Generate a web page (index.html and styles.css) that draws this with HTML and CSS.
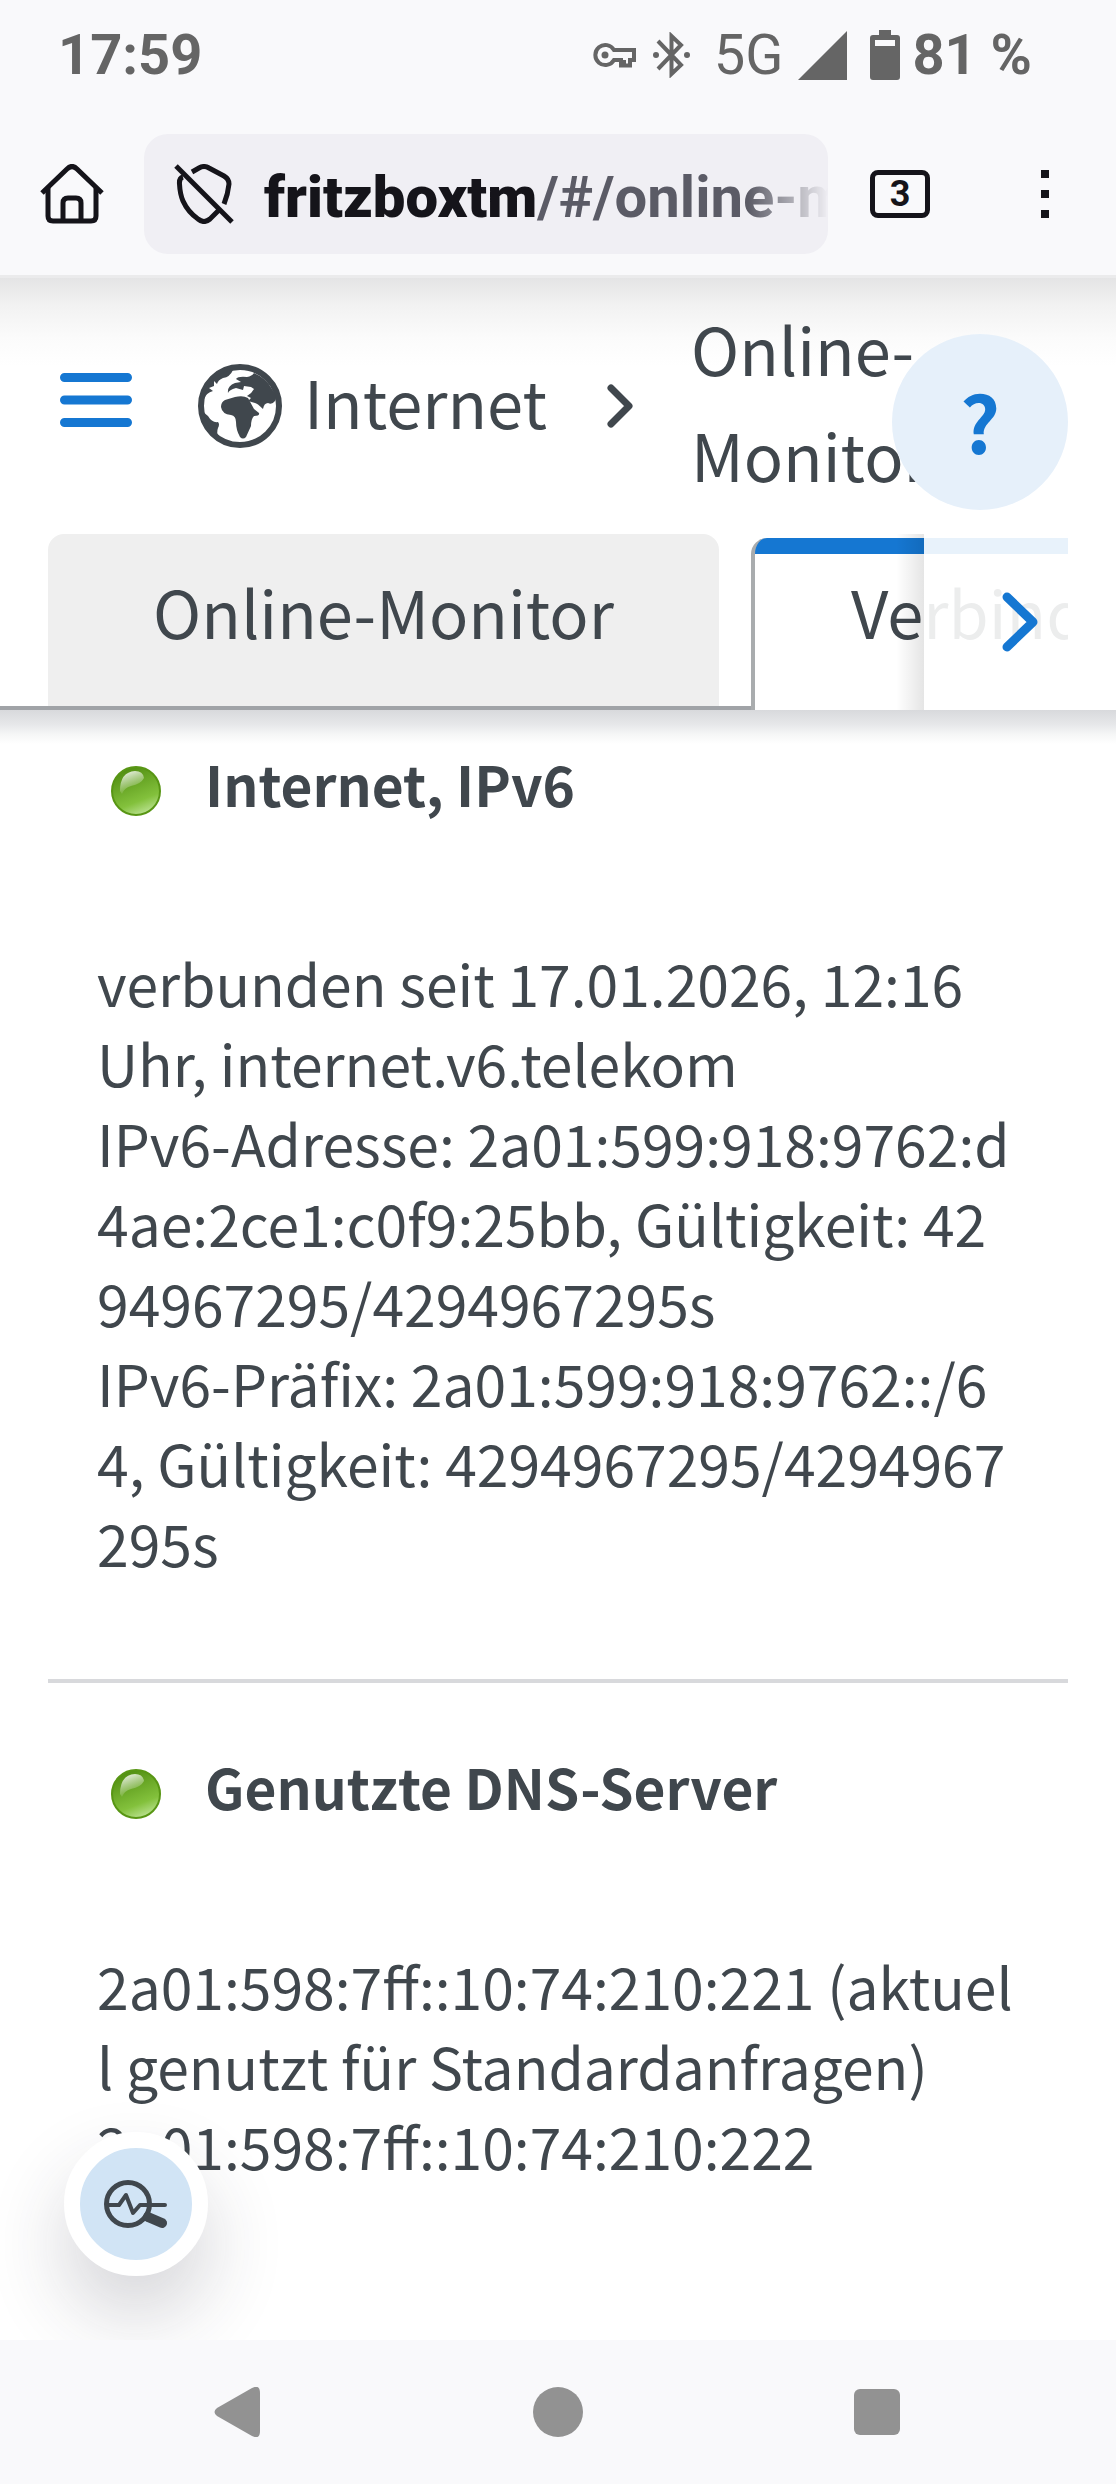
FILE: index.html
```html
<!DOCTYPE html>
<html lang="de">
<head>
<meta charset="utf-8">
<meta name="viewport" content="width=device-width, initial-scale=1">
<title>Online-Monitor</title>
<link rel="stylesheet" href="styles.css">
</head>
<body>
<div class="screen">
  <div class="statusbar">
    <span class="clock">17:59</span>
    <div class="indicators">
      <svg class="i-key" width="43" height="26" viewBox="0 0 43 26" fill="none" stroke="#656565"><path d="M21 8H41V18H37V23.500H28V18H21A10 10 0 1 1 21 8Z" stroke-width="4"/><path d="M31 18V24" stroke-width="4"/><circle cx="12" cy="13" r="3.500" fill="#656565" stroke="none"/></svg>
      <svg class="i-bt" width="37" height="46" viewBox="0 0 37 46" fill="none" stroke="#656565" stroke-width="4"><path d="M5 9L28 33L18.500 42V4L28 13L5 37"/><circle cx="3" cy="23" r="3" fill="#656565" stroke="none"/><circle cx="34" cy="23" r="3" fill="#656565" stroke="none"/></svg>
      <span class="network">5G</span>
      <svg class="i-signal" width="49" height="49" viewBox="0 0 49 49" fill="#656565"><path d="M49 0V49H0Z"/></svg>
      <svg class="i-battery" width="30" height="50" viewBox="0 0 30 50"><path d="M9 0H21V5H27Q30 5 30 8V47Q30 50 27 50H3Q0 50 0 47V8Q0 5 3 5H9Z" fill="#656565"/><path d="M5 10H25V16H5Z" fill="#f9f9fb"/></svg>
      <span class="percent">81 %</span>
    </div>
  </div>

  <div class="toolbar">
    <button class="icon-button" aria-label="Startseite"><svg width="64" height="60" viewBox="0 0 64 60" fill="none" stroke="#15141a" stroke-width="5"><path d="M2 29L27 5Q32 0 37 5L62 29"/><path d="M8 24V52Q8 57 13 57H51Q56 57 56 52V24M23 57V39Q23 34 28 34H36Q41 34 41 39V57"/></svg></button>
    <div class="address">
      <svg width="60" height="60" viewBox="0 0 60 60" fill="none" stroke="#15141a" stroke-width="5"><path d="M2 2L58 58"/><path d="M18 8L25 4Q30 1 35 4L50 12Q55 15 55 20Q54 30 50 40"/><path d="M9 13Q5 14 5.500 20Q6 30 9 37Q14 48 24 55Q30 60 36 55L45 46"/></svg>
      <span class="url"><b>fritzboxtm</b>/#/online-m</span>
    </div>
    <button class="tab-count" aria-label="Offene Tabs">3</button>
    <button class="icon-button more" aria-label="Menü"><svg width="8" height="48" viewBox="0 0 8 48" fill="#15141a"><path d="M0 0H8V8H0ZM0 20H8V28H0ZM0 40H8V48H0Z"/></svg></button>
  </div>

  <header class="page-head">
    <div class="crumbs">
      <button class="menu" aria-label="Navigation"><svg width="72" height="54" viewBox="0 0 72 54" stroke="#1577d2" stroke-width="9" stroke-linecap="round"><path d="M4.500 4.500H67.500M4.500 27H67.500M4.500 49.500H67.500"/></svg></button>
      <a class="crumb" href="#internet">
        <svg width="84" height="84" viewBox="0 0 84 84"><circle cx="42" cy="42" r="39" fill="#fff" stroke="#40474d" stroke-width="6"/><g fill="#40474d"><path d="M56 9Q68 14 74 25Q80 33 77 37Q74 41 70 39Q66 39 65 45Q59 39 57 39L50 37L53 34L49 32Q54 29 56 25L53 23L46 22L45 26L38 24Q31 26 30 29Q29 22 37 19L43 18L38 15Q40 12 49 13Q54 12 56 9Z"/><path d="M37 33Q45 31 50 34L56 45L61 49Q62 52 56 52Q53 55 53 62L48 73Q45 76 42 73Q38 66 38 58Q38 52 33 51Q24 50 23 43Q23 38 27 36Z"/><path d="M5 47Q8 51 10 52Q14 59 20 58Q22 60 20 64Q18 69 21 73Q8 65 5 47Z"/><path d="M35 6Q32 13 25 14Q20 16 19 20L16 17L16 22L11 24L15 27Q8 29 6 35Q8 12 35 6Z"/></g></svg>
        <span class="label">Internet</span>
      </a>
      <svg class="sep" width="26" height="44" viewBox="0 0 26 44" fill="none" stroke="#40474d" stroke-width="7" stroke-linecap="round" stroke-linejoin="round"><path d="M4 4L22 22L4 40"/></svg>
      <span class="label current">Online-<wbr>Monitor</span>
      <button class="help" aria-label="Hilfe">?</button>
    </div>
    <nav class="tabs">
      <div class="strip">
        <a class="tab" href="#monitor">Online-Monitor</a>
        <a class="tab active" href="#details">Verbindungsdetails</a>
      </div>
      <button class="scroll-tabs" aria-label="Weitere Tabs"><svg width="36" height="60" viewBox="0 0 36 60" fill="none" stroke="#1577d2" stroke-width="9" stroke-linecap="round" stroke-linejoin="round"><path d="M5 5L31 30L5 55"/></svg></button>
    </nav>
  </header>

  <main class="content">
    <section class="entry">
      <h2><svg class="led" width="50" height="50" viewBox="0 0 50 50"><use href="#led"/></svg><span>Internet, IPv6</span></h2>
      <p>verbunden seit 17.01.2026, 12:16<br>Uhr, internet.v6.telekom<br>IPv6-Adresse: 2a01:599:918:9762:d<wbr>4ae:2ce1:c0f9:25bb, Gültigkeit: 42<wbr>94967295/4294967295s<br>IPv6-Präfix: 2a01:599:918:9762::/6<wbr>4, Gültigkeit: 4294967295/4294967<wbr>295s</p>
    </section>
    <section class="entry">
      <h2><svg class="led" width="50" height="50" viewBox="0 0 50 50"><use href="#led"/></svg><span>Genutzte DNS-Server</span></h2>
      <p>2a01:598:7ff::10:74:210:221 (aktuel<wbr>l genutzt für Standardanfragen)<br>2a01:598:7ff::10:74:210:222</p>
    </section>
    <button class="diagnose" aria-label="Diagnose"><svg width="64" height="50" viewBox="0 0 64 50" fill="none" stroke="#40474d" stroke-linecap="round" stroke-linejoin="round"><circle cx="24" cy="25" r="21.500" stroke-width="5"/><path d="M5 26H15L22 16L29 34L36 26H61" stroke-width="4"/><path d="M44 38L58 44" stroke-width="10"/></svg></button>
  </main>

  <nav class="system-nav">
    <button class="icon-button" aria-label="Zurück"><svg width="50" height="50" viewBox="0 0 50 50" fill="#929292"><path d="M38 1Q46 -3 46 6V44Q46 53 38 49L3 29Q-2 25 3 21Z"/></svg></button>
    <button class="icon-button" aria-label="Home"><svg width="50" height="50" viewBox="0 0 50 50" fill="#929292"><circle cx="25" cy="25" r="25"/></svg></button>
    <button class="icon-button" aria-label="Übersicht"><svg width="50" height="50" viewBox="0 0 50 50" fill="#929292"><rect x="2" y="2" width="46" height="46" rx="6"/></svg></button>
  </nav>
</div>
<svg class="defs" width="0" height="0" aria-hidden="true"><defs>
  <linearGradient id="led-body" x1="0.300" y1="0" x2="0.700" y2="1"><stop offset="0" stop-color="#4f8c10"/><stop offset="0.700" stop-color="#83c13c"/><stop offset="1" stop-color="#c0e59a"/></linearGradient>
  <linearGradient id="led-shine" x1="0.200" y1="0" x2="0.600" y2="1"><stop offset="0" stop-color="#fff" stop-opacity="0.900"/><stop offset="0.900" stop-color="#fff" stop-opacity="0"/></linearGradient>
  <g id="led"><circle cx="25" cy="25" r="24" fill="url(#led-body)" stroke="#589614" stroke-width="2"/><path d="M9 25Q9 6 24 5Q32 5 33 12Q30 18 20 20Q13 22 11 28Z" fill="url(#led-shine)"/></g>
</defs></svg>
</body>
</html>
```
FILE: styles.css
```css
* { box-sizing: border-box; }
body { margin: 0; background: #fff; color: #40474d; font-family: "Noto Sans CJK JP", "Noto Sans", sans-serif; }
button { margin: 0; padding: 0; border: 0; background: none; font: inherit; color: inherit; display: flex; align-items: center; justify-content: center; flex: none; }
a { color: inherit; text-decoration: none; }
svg { display: block; flex: none; }
.defs { position: absolute; }
.screen { min-height: 100vh; display: flex; flex-direction: column; }

.statusbar { display: flex; justify-content: space-between; align-items: center; height: 110px; padding: 0 84px 0 58px; background: #f9f9fb; color: #656565; font: 700 56px/64px Roboto, sans-serif; }
.indicators { display: flex; align-items: center; }
.i-key { margin-right: 17px; }
.i-bt { margin-right: 24px; }
.network { font-weight: 400; margin-right: 15px; }
.i-signal { margin-right: 23px; }
.i-battery { margin-right: 12px; }

.toolbar { display: flex; align-items: center; height: 168px; padding: 3px 67px 0 40px; background: #f9f9fb; border-bottom: 3px solid #ebebec; }
.address { flex: 1; min-width: 0; display: flex; align-items: center; gap: 30px; height: 120px; margin: 0 42px 0 40px; padding-left: 30px; border-radius: 24px; background: #f0eff4; overflow: hidden; }
.url { flex: 1; min-width: 0; padding-top: 6px; overflow: hidden; white-space: nowrap; color: #5b5b66; font: 700 58px/72px Roboto, sans-serif; -webkit-mask-image: linear-gradient(to left, transparent, #000 80px); mask-image: linear-gradient(to left, transparent, #000 80px); }
.url b { color: #15141a; }
.tab-count { width: 60px; height: 48px; border: 5px solid #15141a; border-radius: 8px; color: #15141a; font: 700 36px/36px Roboto, sans-serif; }
.more { margin-left: 111px; }

.page-head { background: linear-gradient(#e4e4e5, #f2f2f2 28px, #fbfbfb 60px, #fff 88px) top / 100% 88px no-repeat; }
.crumbs { position: relative; display: flex; align-items: center; height: 256px; padding: 0 48px 0 60px; font-size: 65px; line-height: 106px; }
.menu { padding-bottom: 12px; }
.crumb { display: flex; align-items: center; gap: 22px; margin: 0 60px 0 66px; }
.label { padding-bottom: 10px; }
.current { width: 200px; margin-left: 58px; }
.help { position: absolute; top: 56px; right: 48px; width: 176px; height: 176px; padding-bottom: 4px; border-radius: 50%; background: #e6f0fa; color: #1577d2; font-size: 78px; font-weight: 700; line-height: 78px; }

.tabs { position: relative; font-size: 65px; line-height: 154px; }
.strip { display: flex; gap: 32px; height: 176px; margin-right: 48px; padding-left: 48px; overflow: hidden; }
.tab { position: relative; flex: none; padding: 0 102px; min-width: 671px; text-align: center; border-radius: 16px 16px 0 0; background: #efefef; }
.tab::after { content: ""; position: absolute; left: -48px; right: -32px; bottom: 0; height: 4px; background: #a0a3a7; }
.tab.active { margin-top: 4px; padding: 0 96px; line-height: 146px; border-left: 4px solid #a9acae; background: linear-gradient(#1577d2, #1577d2) top / 100% 16px no-repeat #fff; }
.tab.active::after { content: none; }
.scroll-tabs { position: absolute; top: 0; right: 48px; width: 144px; height: 176px; padding-left: 48px; background: rgba(255, 255, 255, 0.9); }
.scroll-tabs::before { content: ""; position: absolute; top: 0; bottom: 0; right: 100%; width: 28px; background: linear-gradient(to left, rgba(0, 0, 0, 0.1), transparent); }

.content { position: relative; flex: 1; padding: 0 48px; background: linear-gradient(#d8d9dc, #e6e7e9 14px, #f5f6f6 24px, #fff 34px) top / 100% 34px no-repeat; }
.entry { padding: 33px 49px 97px; border-bottom: 4px solid #d8d9dc; }
.entry + .entry { border-bottom: 0; padding-top: 63px; padding-bottom: 96px; }
h2 { display: flex; align-items: center; gap: 44px; margin: 0 0 103px; padding-left: 14px; font-size: 55px; font-weight: 600; line-height: 80px; }
h2 span { padding-bottom: 16px; }
.entry p { margin: 0; font-size: 57px; line-height: 80px; white-space: nowrap; }
.diagnose { position: absolute; left: 64px; bottom: 64px; width: 144px; height: 144px; border: 16px solid #fff; border-radius: 50%; background: #d1e4f5; box-shadow: 0 40px 80px rgba(40, 40, 60, 0.2); }

.system-nav { position: relative; display: flex; justify-content: space-between; align-items: center; height: 144px; padding: 0 214px; background: #f9f9fb; }
```
